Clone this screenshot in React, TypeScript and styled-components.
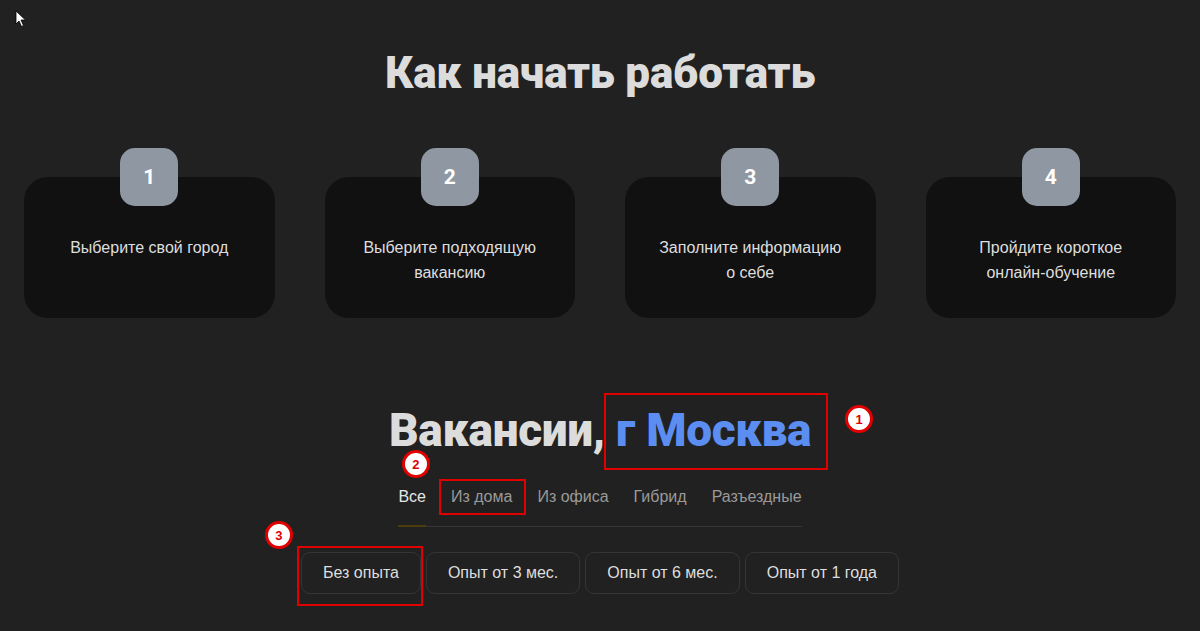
import React from 'react';
import styled, { createGlobalStyle } from 'styled-components';

const GlobalStyle = createGlobalStyle`
  html, body {
    margin: 0;
    padding: 0;
    background: #212121;
  }
  body {
    font-family: 'Roboto', 'Liberation Sans', Arial, sans-serif;
    color: #dcdcdc;
  }
`;

const Page = styled.div`
  position: relative;
  width: 1200px;
  height: 631px;
  overflow: hidden;
  background: #212121;
`;

const Title = styled.h1`
  margin: 46px 0 0;
  height: 54px;
  line-height: 54px;
  text-align: center;
  font-family: 'Roboto', sans-serif;
  font-weight: 900;
  font-size: 44px;
  letter-spacing: -0.2px;
  color: #dcdcdc;
`;

const Steps = styled.div`
  display: grid;
  grid-template-columns: repeat(4, 1fr);
  gap: 50px;
  padding: 0 24px;
  margin-top: 48px;
`;

const Step = styled.div`
  position: relative;
  padding-top: 29px;
`;

const Badge = styled.div`
  position: absolute;
  top: 0;
  left: 50%;
  transform: translateX(-50%);
  width: 58px;
  height: 58px;
  border-radius: 15px;
  background: #8f97a2;
  color: #ffffff;
  display: flex;
  align-items: center;
  justify-content: center;
  font-family: 'Roboto', sans-serif;
  font-weight: 700;
  font-size: 21px;
`;

const Card = styled.div`
  height: 141px;
  box-sizing: border-box;
  padding: 58px 20px 0;
  border-radius: 24px;
  background: #111111;
  text-align: center;
  font-family: 'Liberation Sans', Arial, sans-serif;
  font-size: 16px;
  line-height: 25px;
  color: #dedede;
`;

const Heading = styled.h2`
  margin: 85px 0 0;
  height: 54px;
  line-height: 54px;
  text-align: center;
  font-family: 'Roboto', sans-serif;
  font-weight: 900;
  font-size: 46px;
  letter-spacing: -0.3px;
  color: #dcdcdc;
`;

const City = styled.span`
  color: #5b8ef0;
`;

const TabsRow = styled.div`
  display: flex;
  justify-content: center;
  margin-top: 30px;
`;

const Tabs = styled.div`
  display: flex;
  gap: 25px;
  border-bottom: 1px solid #353535;
`;

const Tab = styled.div<{ $active?: boolean }>`
  padding-bottom: 18px;
  margin-bottom: -1px;
  line-height: 20px;
  font-family: 'Liberation Sans', Arial, sans-serif;
  font-size: 16px;
  color: ${(p) => (p.$active ? '#e6e6e6' : '#9a9a9a')};
  border-bottom: 2px solid ${(p) => (p.$active ? '#4d3d0d' : 'transparent')};
`;

const Filters = styled.div`
  display: flex;
  justify-content: center;
  gap: 5px;
  margin-top: 25px;
`;

const FilterButton = styled.div`
  position: relative;
  height: 42px;
  box-sizing: border-box;
  padding: 0 21px;
  display: flex;
  align-items: center;
  border: 1px solid #353535;
  border-radius: 9px;
  font-family: 'Liberation Sans', Arial, sans-serif;
  font-size: 16px;
  color: #dedede;
`;

// annotation overlay: a red frame around a part, with a numbered marker
const Annotated = styled.span`
  position: relative;
  display: inline-block;
`;

const Frame = styled.span<{ $t: number; $r: number; $b: number; $l: number }>`
  position: absolute;
  top: ${(p) => p.$t}px;
  right: ${(p) => p.$r}px;
  bottom: ${(p) => p.$b}px;
  left: ${(p) => p.$l}px;
  border: 2px solid #e00000;
  pointer-events: none;
`;

const Marker = styled.span<{ $x: number; $y: number }>`
  position: absolute;
  left: ${(p) => p.$x - 14}px;
  top: ${(p) => p.$y - 14}px;
  width: 28px;
  height: 28px;
  box-sizing: border-box;
  border-radius: 50%;
  border: 3px solid #e00000;
  background: #ffffff;
  color: #e00000;
  display: flex;
  align-items: center;
  justify-content: center;
  font-family: 'Liberation Sans', Arial, sans-serif;
  font-weight: 700;
  font-size: 13px;
  line-height: 1;
  letter-spacing: 0;
`;

const Cursor = styled.svg`
  position: absolute;
  left: 15px;
  top: 10px;
`;

const steps = [
  { n: 1, text: ['Выберите свой город'] },
  { n: 2, text: ['Выберите подходящую', 'вакансию'] },
  { n: 3, text: ['Заполните информацию', 'о себе'] },
  { n: 4, text: ['Пройдите короткое', 'онлайн-обучение'] },
];

const tabs = ['Все', 'Из дома', 'Из офиса', 'Гибрид', 'Разъездные'];
const filters = ['Без опыта', 'Опыт от 3 мес.', 'Опыт от 6 мес.', 'Опыт от 1 года'];

export default function App() {
  return (
    <Page>
      <GlobalStyle />
      <Cursor width="12" height="18" viewBox="0 0 12 18">
        <path d="M1 1 L1 14 L4 11 L6.5 16.5 L8.5 15.5 L6 10 L10.5 10 Z" fill="#ffffff" stroke="#000" strokeWidth="0.8" />
      </Cursor>

      <Title>Как начать работать</Title>

      <Steps>
        {steps.map((s) => (
          <Step key={s.n}>
            <Badge>{s.n}</Badge>
            <Card>
              {s.text.map((line) => (
                <div key={line}>{line}</div>
              ))}
            </Card>
          </Step>
        ))}
      </Steps>

      <Heading>
        Вакансии,{' '}
        <Annotated>
          <City>г Москва</City>
          <Frame $t={-10} $r={-17} $b={-13} $l={-12}>
            <Marker $x={253} $y={24}>1</Marker>
          </Frame>
        </Annotated>
      </Heading>

      <TabsRow>
        <Tabs>
          {tabs.map((t, i) => (
            <Tab key={t} $active={i === 0}>
              {i === 1 ? (
                <Annotated>
                  {t}
                  <Frame $t={-8} $r={-14} $b={-8} $l={-12}>
                    <Marker $x={-25} $y={-17}>2</Marker>
                  </Frame>
                </Annotated>
              ) : (
                t
              )}
            </Tab>
          ))}
        </Tabs>
      </TabsRow>

      <Filters>
        {filters.map((f, i) => (
          <FilterButton key={f}>
            {f}
            {i === 0 && (
              <Frame $t={-7} $r={-3} $b={-13} $l={-5}>
                <Marker $x={-20} $y={-13}>3</Marker>
              </Frame>
            )}
          </FilterButton>
        ))}
      </Filters>
    </Page>
  );
}
